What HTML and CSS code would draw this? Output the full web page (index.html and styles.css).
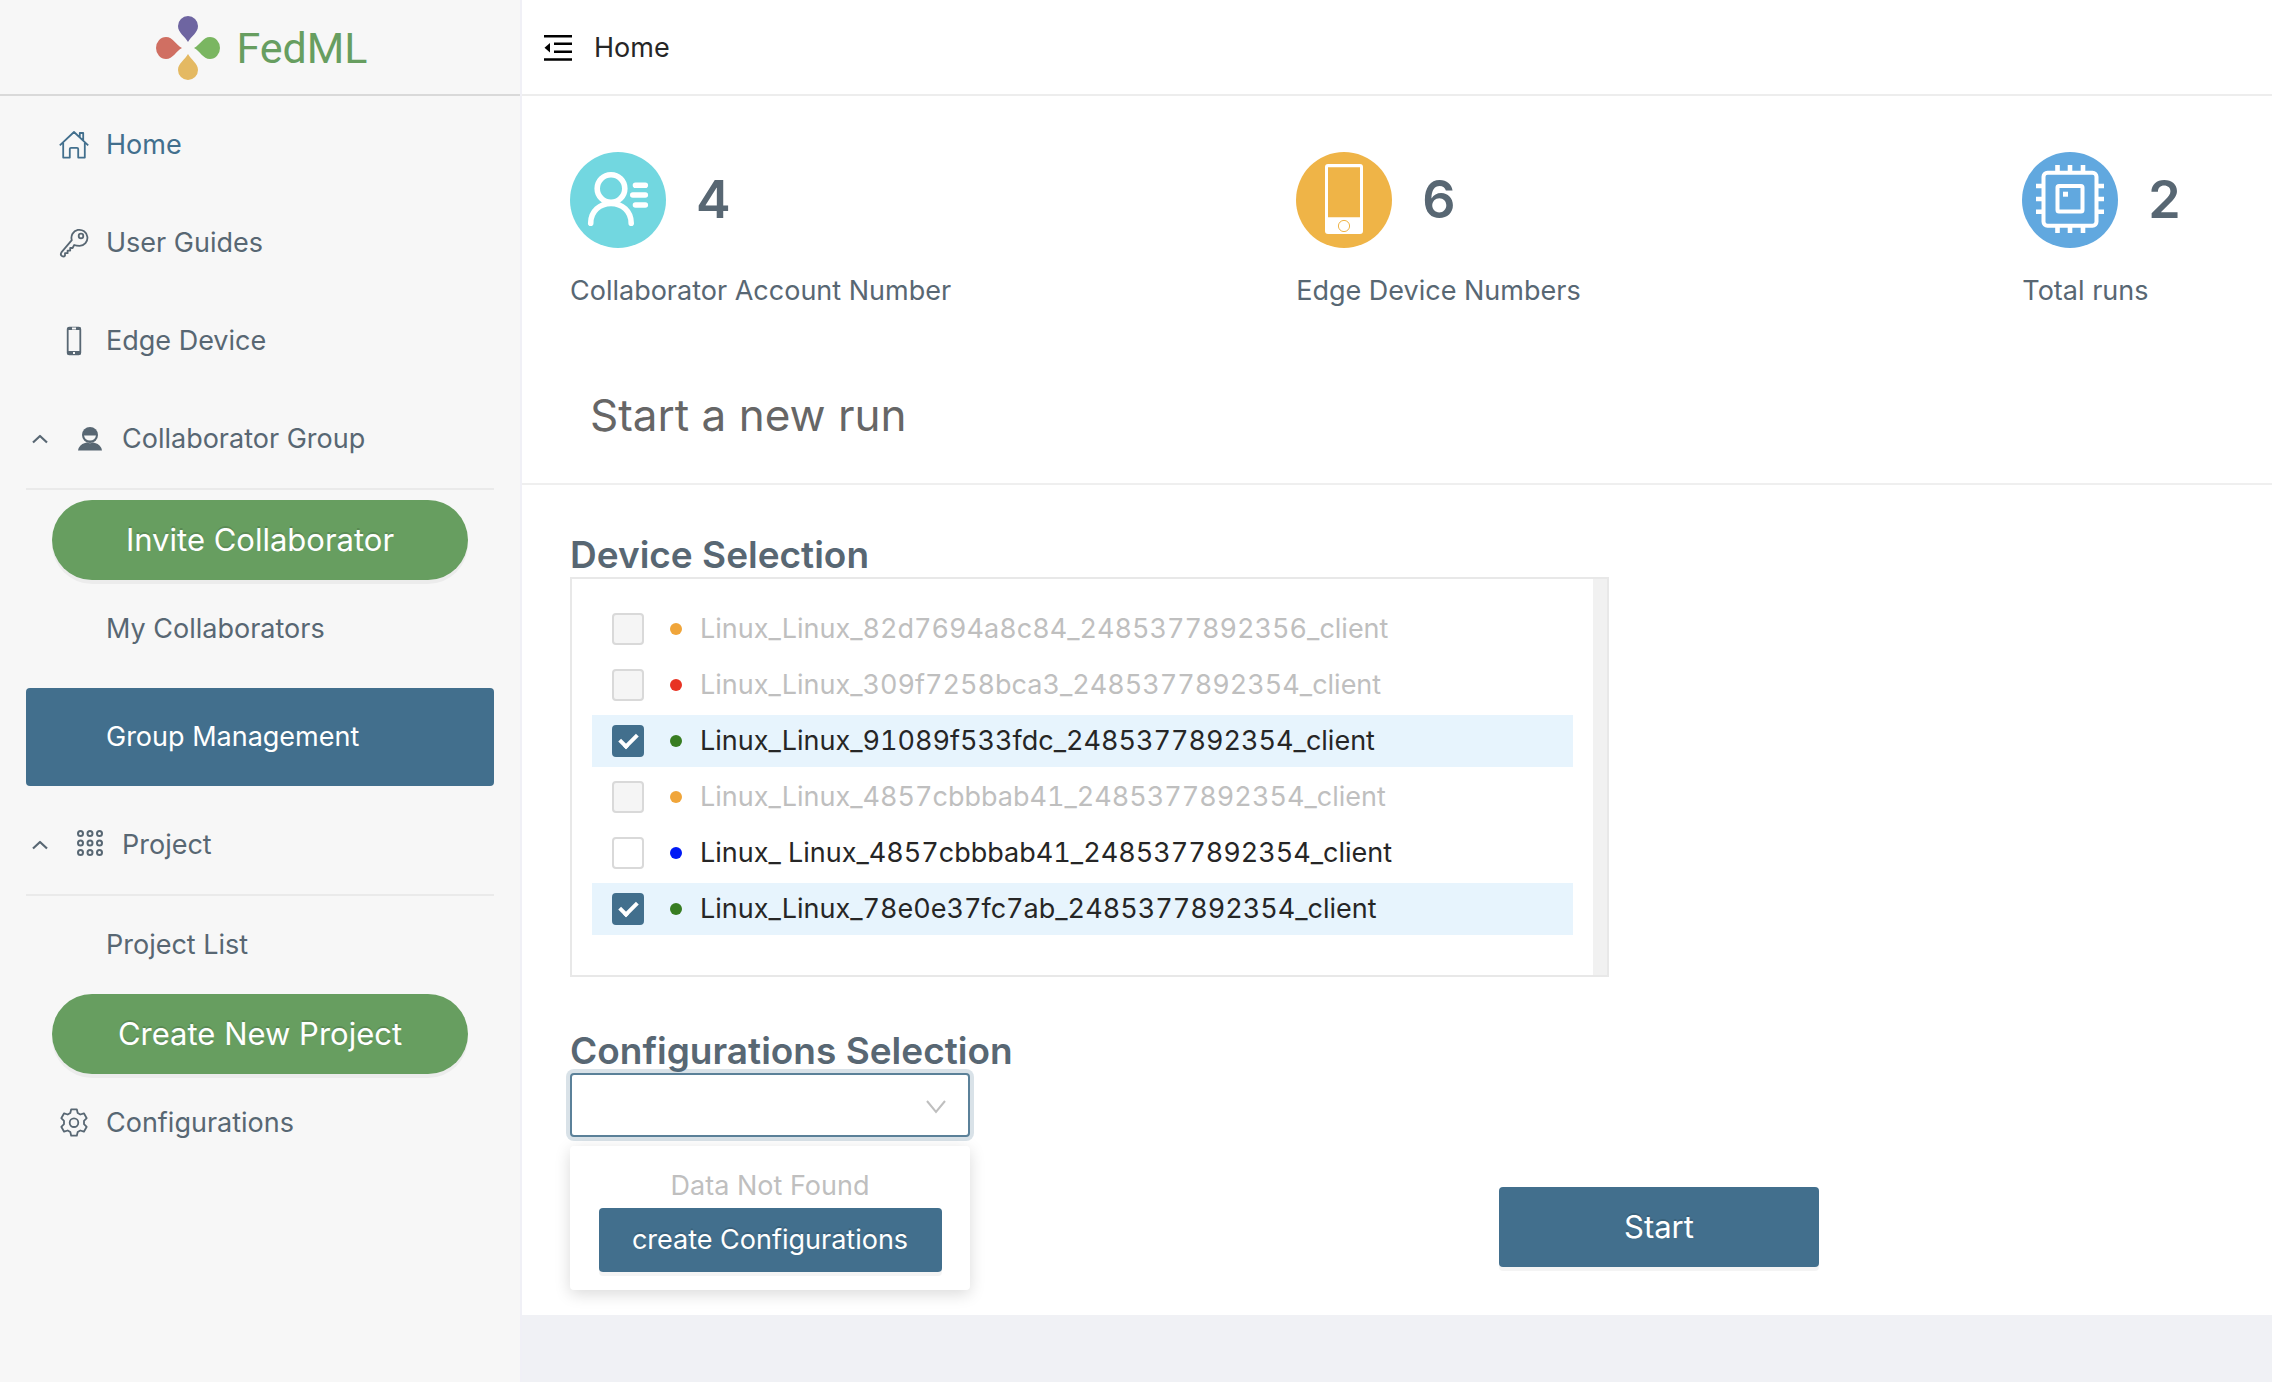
FILE: index.html
```html
<!DOCTYPE html>
<html lang="en">
<head>
<meta charset="utf-8">
<meta name="viewport" content="width=device-width, initial-scale=1">
<title>FedML - Home</title>
<link rel="stylesheet" href="styles.css">
</head>
<body>
<div class="app">
  <aside class="sidebar">
    <a class="brand" href="#">
      <svg class="brand-mark" viewBox="0 0 64 64" aria-hidden="true">
        <path fill="#7ab661" d="M38 32c6-3 9-11 16-11a10 11 0 0 1 0 22c-7 0-10-8-16-11z" />
        <path fill="#e4b962" d="M32 38c3 6 10 9 10 16a10 10 0 0 1-20 0c0-7 7-10 10-16z"/>
        <path fill="#d06f62" d="M26 32c-6 3-9 11-16 11a10 11 0 0 1 0-22c7 0 10 8 16 11z"/>
        <path fill="#6e65a1" d="M32 26c-3-6-10-9-10-16a10 10 0 0 1 20 0c0 7-7 10-10 16z"/>
      </svg>
      <span>FedML</span>
    </a>
    <nav class="nav" aria-label="Main">
      <a class="nav-item current" href="#">
        <svg class="icon" viewBox="0 0 30 30" aria-hidden="true"><path d="M.8 15.400 15 2l14.200 13.400M4.200 13v14.600h6.600v-8.600q0-1.200 1.200-1.200h6q1.200 0 1.200 1.200v8.600h6.600V13M20.800 7V3h3.400v7"/></svg>
        <span>Home</span>
      </a>
      <a class="nav-item" href="#">
        <svg class="icon" viewBox="0 0 30 30" aria-hidden="true"><path d="M12.800 12.200 2.400 24.400q-1.400 2.200.6 3.600 1.800 1.200 3-.4v-2.400h2.600v-2.600h2.600v-2.600h2.400l1.600-3c1.600.6 3.400.8 5.400.8a8 8 0 1 0-7.800-5.600z"/><circle cx="22" cy="8" r="2.300"/></svg>
        <span>User Guides</span>
      </a>
      <a class="nav-item" href="#">
        <svg class="icon" viewBox="0 0 30 30" aria-hidden="true"><rect x="8.700" y="1.700" width="12.600" height="26.600" rx="1.500"/><path class="solid" d="M8 3V2.500Q8.500 1 10 1h10q1.500 0 2 1.500V4H8zM8 25h14v2.500q-.5 1.500-2 1.500H10q-1.500 0-2-1.500z"/><path stroke="#f7f7f7" d="M13 2.500h4M14 27h2"/></svg>
        <span>Edge Device</span>
      </a>
      <button class="nav-group" type="button" aria-expanded="true">
        <svg class="caret" viewBox="0 0 16 10" aria-hidden="true"><path d="M1 8.500 8 2l7 6.500"/></svg>
        <svg class="icon" viewBox="0 0 30 30" aria-hidden="true"><path class="solid" d="M7 11a8 8 0 0 1 16 0 8 8 0 0 1-16 0z"/><path fill="#f7f7f7" stroke="none" d="M9 11.500h12q-1 5-6 5t-6-5z"/><path class="solid" d="M3 26.500q1-6 7-7.500l2-.6q3 1.600 6 0l2 .6q6 1.500 7 7.500z"/></svg>
        <span>Collaborator Group</span>
      </button>
      <div class="nav-sub">
        <button class="pill" type="button">Invite Collaborator</button>
        <a class="nav-item plain" href="#">My Collaborators</a>
        <a class="nav-item plain selected" href="#">Group Management</a>
      </div>
      <button class="nav-group" type="button" aria-expanded="true">
        <svg class="caret" viewBox="0 0 16 10" aria-hidden="true"><path d="M1 8.500 8 2l7 6.500"/></svg>
        <svg class="icon dots" viewBox="0 0 30 30" aria-hidden="true"><circle cx="5.500" cy="3.500" r="2.500"/><circle cx="15" cy="3.500" r="2.500"/><circle cx="24.500" cy="3.500" r="2.500"/><circle cx="5.500" cy="13" r="2.500"/><circle cx="15" cy="13" r="2.500"/><circle cx="24.500" cy="13" r="2.500"/><circle cx="5.500" cy="22.500" r="2.500"/><circle cx="15" cy="22.500" r="2.500"/><circle cx="24.500" cy="22.500" r="2.500"/></svg>
        <span>Project</span>
      </button>
      <a class="nav-item plain" href="#">Project List</a>
      <button class="pill" type="button">Create New Project</button>
      <a class="nav-item" href="#">
        <svg class="icon" viewBox="0 0 30 30" aria-hidden="true"><path d="M12.200 1.300h5.600l.9 3.700 2.600 1.500 3.600-1.200 2.800 4.900-2.700 2.600v3.400l2.700 2.600-2.800 4.900-3.600-1.200-2.600 1.500-.9 3.700h-5.600l-.9-3.700-2.600-1.500-3.600 1.200-2.800-4.900L5 16.200v-3.400l-2.700-2.600 2.800-4.900 3.600 1.200L11.300 5z"/><circle cx="15" cy="14.700" r="4.300"/></svg>
        <span>Configurations</span>
      </a>
    </nav>
  </aside>

  <div class="page">
    <header class="topbar">
      <button class="fold" type="button" aria-label="Collapse menu">
        <svg class="fold-icon" viewBox="0 0 30 30" aria-hidden="true"><path stroke="#000" stroke-width="2.600" d="M1 3.300h28M11 10.800h18M11 18.800h18M1 26.500h28"/><path d="M1.500 14.800 7 10v9.600z"/></svg>
      </button>
      <span>Home</span>
    </header>
    <main class="content">
      <section class="stats" aria-label="Statistics">
        <div class="stat">
          <div class="stat-top">
            <svg class="stat-icon" viewBox="0 0 96 96" aria-hidden="true"><circle cx="48" cy="48" r="48" fill="#72d7e0"/><g fill="none" stroke="#fff" stroke-width="5.600" stroke-linecap="round"><circle cx="41" cy="36.500" r="13.800"/><path d="M20.700 71.300C20.700 59 30 51.500 41 51.500S61.200 59 61.200 71.300M65.500 33.300h9.800M62.800 43h12.500M65.500 53h9.800"/></g></svg>
            <strong class="stat-value">4</strong>
          </div>
          <span>Collaborator Account Number</span>
        </div>
        <div class="stat">
          <div class="stat-top">
            <svg class="stat-icon" viewBox="0 0 96 96" aria-hidden="true"><circle cx="48" cy="48" r="48" fill="#efb447"/><rect x="29" y="12" width="38" height="70" rx="3" fill="#fff"/><path fill="#efb447" d="M32 15.300h32v50H32z"/><circle cx="48" cy="74" r="5.600" fill="none" stroke="#efb447"/></svg>
            <strong class="stat-value">6</strong>
          </div>
          <span>Edge Device Numbers</span>
        </div>
        <div class="stat">
          <div class="stat-top">
            <svg class="stat-icon" viewBox="0 0 96 96" aria-hidden="true"><circle cx="48" cy="48" r="48" fill="#61a8df"/><g fill="none" stroke="#fff" stroke-width="4"><rect x="21.500" y="20.700" width="53" height="53" rx="4"/><rect x="35.500" y="34" width="25" height="25.500" rx="1.500"/><path stroke-width="4.600" d="M35.500 13v6M48 13v6M61 13v6M35.500 75v6M48 75v6M61 75v6M14 34h6M14 47h6M14 59.700h6M76 34h6M76 47h6M76 59.700h6"/></g><path fill="#fff" d="M41 39.700h5v5h-5z"/></svg>
            <strong class="stat-value">2</strong>
          </div>
          <span>Total runs</span>
        </div>
      </section>
      <h1 class="run-title">Start a new run</h1>
      <form class="run-form">
        <h2 class="section-title" id="devices-title">Device Selection</h2>
        <div class="device-box" role="group" aria-labelledby="devices-title">
          <div class="device-list">
            <label class="device"><input type="checkbox" disabled><i class="dot orange"></i><span>Linux_Linux_82d7694a8c84_2485377892356_client</span></label>
            <label class="device"><input type="checkbox" disabled><i class="dot red"></i><span>Linux_Linux_309f7258bca3_2485377892354_client</span></label>
            <label class="device"><input type="checkbox" checked><i class="dot green"></i><span>Linux_Linux_91089f533fdc_2485377892354_client</span></label>
            <label class="device"><input type="checkbox" disabled><i class="dot orange"></i><span>Linux_Linux_4857cbbbab41_2485377892354_client</span></label>
            <label class="device"><input type="checkbox"><i class="dot blue"></i><span>Linux_ Linux_4857cbbbab41_2485377892354_client</span></label>
            <label class="device"><input type="checkbox" checked><i class="dot green"></i><span>Linux_Linux_78e0e37fc7ab_2485377892354_client</span></label>
          </div>
          <div class="scroll-track"></div>
        </div>
        <label class="section-title config-title" for="config">Configurations Selection</label>
        <div class="run-row">
          <div class="select-wrap">
            <select id="config"></select>
            <svg class="select-arrow" viewBox="0 0 20 14" aria-hidden="true"><path d="M1 1l9 11 9-11"/></svg>
            <div class="dropdown">
              <span>Data Not Found</span>
              <button class="primary" type="button">create Configurations</button>
            </div>
          </div>
          <button class="primary start" type="button">Start</button>
        </div>
      </form>
    </main>
  </div>
</div>
</body>
</html>
```
FILE: styles.css
```css
*, ::after { box-sizing: border-box; }

body {
  margin: 0;
  background: #f0f1f5;
  color: #586773;
  font: 27px/40px Inter, "Liberation Sans", sans-serif;
}

button, select, input { font: inherit; color: inherit; margin: 0; }
button { border: 0; background: none; padding: 0; cursor: pointer; }
a { color: inherit; text-decoration: none; }

.app { display: flex; min-height: 100vh; }

/* Sidebar */
.sidebar {
  flex: 0 0 522px;
  background: #f7f7f7;
  border-right: 2px solid #f0f0f6;
}
.brand {
  display: flex;
  align-items: center;
  justify-content: center;
  gap: 16px;
  height: 96px;
  padding: 2px 0 0 4px;
  border-bottom: 2px solid #d9d9d9;
  color: #679e60;
  font-size: 43px;
  font-family: Roboto, "Liberation Sans", sans-serif;
}
.brand-mark { width: 64px; height: 64px; }
.nav { padding: 0 26px; }
.nav-item, .nav-group {
  display: flex;
  align-items: center;
  width: 100%;
  height: 98px;
}
.nav-item { gap: 17px; padding-left: 33px; }
.nav-item.plain { padding-left: 80px; }
.nav-item.current { color: #426f8d; }
.nav-item.selected {
  margin: 10px 0;
  border-radius: 4px;
  background: #426f8d;
  color: #fff;
}
.nav-group {
  height: 100px;
  padding-left: 6px;
  border-bottom: 2px solid #eaeaea;
}
.nav-group .caret { margin-right: 27px; }
.nav-group .icon { margin-right: 17px; }
.nav-sub { padding-top: 10px; }
.icon, .caret { fill: none; stroke: currentColor; stroke-width: 1.8; stroke-linejoin: round; }
.icon { width: 30px; height: 30px; }
.caret { width: 16px; height: 10px; stroke-width: 2.2; }
.dots { stroke-width: 2; }
.solid { fill: currentColor; stroke: none; }
.pill {
  display: block;
  width: calc(100% - 52px);
  height: 80px;
  margin: 0 26px;
  border-radius: 40px;
  background: #679e60;
  color: #fff;
  font-size: 31px;
  text-shadow: 0 -2px 0 rgba(0, 0, 0, .12);
  box-shadow: 0 4px 0 rgba(0, 0, 0, .045);
}

/* Main column */
.page { flex: 1; min-width: 0; }
.topbar {
  display: flex;
  align-items: center;
  gap: 21px;
  height: 96px;
  padding: 2px 0 0 21px;
  border-bottom: 2px solid #ededed;
  background: #fff;
  color: #262626;
}
.fold, .fold-icon { display: block; width: 30px; height: 30px; }
.content { padding-bottom: 48px; background: #fff; }
.stats {
  display: grid;
  grid-template-columns: 32fr 32fr 11fr;
  padding: 56px 0 0 48px;
}
.stat-top {
  display: flex;
  align-items: center;
  gap: 30px;
  margin-bottom: 23px;
}
.stat-icon { width: 96px; height: 96px; }
.stat-value { font-size: 52px; font-weight: 600; }
.run-title {
  margin: 47px 0 0;
  padding: 20px 68px 30px;
  border-bottom: 2px solid #efefef;
  color: #666;
  font-size: 44px;
  font-weight: 400;
  line-height: 75px;
}
.run-form { padding: 48px 48px 0; }
.section-title {
  display: block;
  margin: 0;
  font-size: 37px;
  font-weight: 600;
  line-height: 44px;
}
.config-title { margin-top: 52px; }

.device-box {
  display: flex;
  max-width: 1039px;
  border: 2px solid #e8e8e8;
}
.device-list {
  flex: 1;
  display: flex;
  flex-direction: column;
  gap: 4px;
  padding: 24px 20px 40px;
}
.scroll-track { flex: 0 0 14px; background: #f1f1f1; }
.device {
  display: flex;
  align-items: center;
  height: 52px;
  padding-left: 20px;
  color: #262626;
  font-feature-settings: "tnum";
}
.device:has(:checked) { background: #e7f4fd; }
.device:has(:disabled) { color: #bfbfbf; }
.device input {
  appearance: none;
  display: grid;
  place-items: center;
  width: 32px;
  height: 32px;
  border: 2px solid #d9d9d9;
  border-radius: 4px;
  background: #fff;
}
.device input:disabled { background: #f5f5f5; }
.device input:checked { border-color: #426f8d; background: #426f8d; }
.device input:checked::after {
  content: "";
  width: 11px;
  height: 18px;
  margin-bottom: 4px;
  border: solid #fff;
  border-width: 0 4px 4px 0;
  transform: rotate(45deg);
}
.dot {
  width: 12px;
  height: 12px;
  margin: 0 18px 0 26px;
  border-radius: 50%;
}
.orange { background: #f0a53a; }
.red { background: #e83323; }
.green { background: #387d22; }
.blue { background: #0019f5; }

.run-row {
  display: grid;
  grid-template-columns: 41fr 32fr;
}
.select-wrap { position: relative; width: 400px; }
select {
  appearance: none;
  display: block;
  width: 100%;
  height: 64px;
  border: 2px solid #5b8199;
  border-radius: 4px;
  outline: 0;
  background: #fff;
  box-shadow: 0 0 0 4px rgba(66, 111, 141, .2);
}
.select-arrow {
  position: absolute;
  top: 27px;
  right: 24px;
  width: 20px;
  height: 14px;
  fill: none;
  stroke: #bfbfbf;
  stroke-width: 2;
  pointer-events: none;
}
.dropdown {
  position: absolute;
  top: 73px;
  left: 0;
  width: 100%;
  height: 144px;
  display: flex;
  flex-direction: column;
  align-items: center;
  padding-top: 20px;
  border-radius: 4px;
  background: #fff;
  color: #bfbfbf;
  box-shadow: 0 4px 16px rgba(0, 0, 0, .15);
}
.dropdown .primary { width: 343px; height: 64px; margin-top: 2px; }
.primary {
  border-radius: 4px;
  background: #426f8d;
  color: #fff;
  text-shadow: 0 -2px 0 rgba(0, 0, 0, .12);
  box-shadow: 0 4px 0 rgba(0, 0, 0, .045);
}
.start { width: 320px; height: 80px; margin-top: 114px; font-size: 31px; }
```
